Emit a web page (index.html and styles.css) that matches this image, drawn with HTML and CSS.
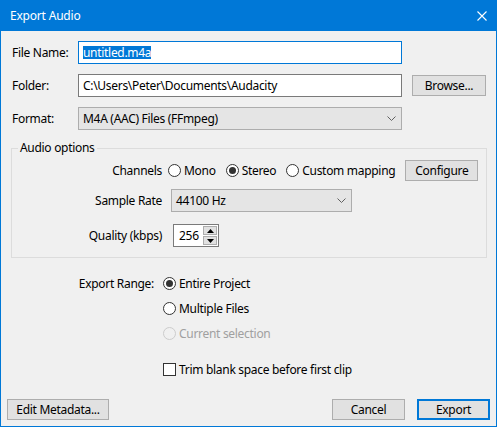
FILE: index.html
```html
<!DOCTYPE html>
<html>
<head>
<meta charset="utf-8">
<title>Export Audio</title>
<link rel="stylesheet" href="styles.css">
</head>
<body>
<div class="window">
  <div class="titlebar">
    <span class="title">Export Audio</span>
    <svg class="close" width="10" height="10" viewBox="0 0 10 10"><path d="M0.5 0.5 L9.5 9.5 M9.5 0.5 L0.5 9.5" stroke="#fff" stroke-width="1.1" fill="none"/></svg>
  </div>
  <div class="content">
    <div class="file-grid">
      <span class="lbl">File Name:</span>
      <div class="textbox focused"><span class="sel">untitled.m4a</span></div>
      <span></span>
      <span class="lbl">Folder:</span>
      <div class="textbox">C:\Users\Peter\Documents\Audacity</div>
      <button class="btn browse">Browse...</button>
      <span class="lbl">Format:</span>
      <div class="select">
        <span>M4A (AAC) Files (FFmpeg)</span>
        <svg class="chev" width="9" height="5" viewBox="0 0 9 5"><path d="M0.5 0.5 L4.5 4.5 L8.5 0.5" stroke="#606060" fill="none"/></svg>
      </div>
    </div>

    <fieldset class="group">
      <legend>Audio options</legend>
      <div class="opt-row channels-row">
        <span class="olbl">Channels</span>
        <div class="channels">
          <span class="radio-item"><span class="radio"></span>Mono</span>
          <span class="radio-item"><span class="radio checked"></span>Stereo</span>
          <span class="radio-item"><span class="radio"></span>Custom mapping</span>
          <button class="btn configure">Configure</button>
        </div>
      </div>
      <div class="opt-row rate-row">
        <span class="olbl">Sample Rate</span>
        <div class="select rate">
          <span>44100 Hz</span>
          <svg class="chev" width="9" height="5" viewBox="0 0 9 5"><path d="M0.5 0.5 L4.5 4.5 L8.5 0.5" stroke="#606060" fill="none"/></svg>
        </div>
      </div>
      <div class="opt-row spin-row">
        <span class="olbl">Quality (kbps)</span>
        <div class="spin">
          <div class="spin-text">256</div>
          <div class="spin-btns">
            <span class="spin-btn"><svg width="7" height="4" viewBox="0 0 7 4"><path d="M3.5 0 L7 4 L0 4 Z" fill="#000"/></svg></span>
            <span class="spin-btn"><svg width="7" height="4" viewBox="0 0 7 4"><path d="M0 0 L7 0 L3.5 4 Z" fill="#000"/></svg></span>
          </div>
        </div>
      </div>
    </fieldset>

    <div class="range">
      <span class="rlbl">Export Range:</span>
      <span class="radio-item"><span class="radio checked"></span>Entire Project</span>
      <span></span>
      <span class="radio-item"><span class="radio"></span>Multiple Files</span>
      <span></span>
      <span class="radio-item disabled"><span class="radio"></span>Current selection</span>
      <span></span>
      <span class="radio-item trim"><span class="check"></span>Trim blank space before first clip</span>
    </div>

    <div class="footer">
      <button class="btn meta">Edit Metadata...</button>
      <span class="spacer"></span>
      <button class="btn cancel">Cancel</button>
      <button class="btn export">Export</button>
    </div>
  </div>
</div>
</body>
</html>
```

FILE: styles.css
```css
* { box-sizing: border-box; }
html, body { margin: 0; padding: 0; }
body {
  font-family: "Noto Sans", "Segoe UI", sans-serif;
  font-size: 12px;
  letter-spacing: -0.3px;
  color: #000;
  background: #f0f0f0;
  white-space: nowrap;
}
.window {
  width: 497px;
  height: 427px;
  border: 1px solid #0078d7;
  border-top: none;
  background: #f0f0f0;
  display: flex;
  flex-direction: column;
}
.titlebar {
  height: 31px;
  margin: 0 -1px;
  background: #0078d7;
  display: flex;
  align-items: center;
  justify-content: space-between;
  padding: 0 10px 0 10px;
  color: #fff;
  flex: none;
}
.title { font-size: 12px; line-height: 16px; letter-spacing: -0.2px; }
.close { display: block; }
.content {
  flex: 1;
  display: flex;
  flex-direction: column;
}
.file-grid {
  margin: 10px 0 0 11px;
  display: grid;
  grid-template-columns: 66px 324px 84px;
  row-gap: 10px;
  grid-auto-rows: 23px;
  align-items: center;
}
.lbl { line-height: 16px; }
.textbox {
  height: 23px;
  border: 1px solid #7a7a7a;
  background: #fff;
  padding: 0 4px;
  display: flex;
  align-items: center;
  overflow: hidden;
  line-height: 16px;
}
.textbox.focused { border-color: #0078d7; }
.sel {
  background: #0078d7;
  color: #fff;
  line-height: 13px;
}
.btn {
  font-family: inherit;
  font-size: 12px;
  letter-spacing: -0.3px;
  white-space: nowrap;
  color: #000;
  height: 21px;
  background: #e1e1e1;
  border: 1px solid #adadad;
  border-radius: 0;
  padding: 0;
  margin: 0;
  line-height: 16px;
}
.browse { width: 74px; justify-self: end; }
.select {
  height: 23px;
  border: 1px solid #adadad;
  background: #e5e5e5;
  display: flex;
  align-items: center;
  justify-content: space-between;
  padding: 0 5px 0 4px;
  line-height: 16px;
}
.chev { display: block; }
.group {
  margin: 10px 0 0 10px;
  width: 476px;
  border: 1px solid #dcdcdc;
  padding: 0 0 10px 0;
  min-width: 0;
}
.group legend {
  margin-left: 6px;
  padding: 0 2px;
  line-height: 16px;
}
.opt-row {
  display: flex;
  align-items: center;
}
.channels-row { margin-top: 4px; height: 21px; }
.rate-row { margin-top: 8px; height: 23px; }
.spin-row { margin-top: 12px; height: 23px; }
.olbl {
  width: 151px;
  text-align: right;
  padding-right: 1px;
  line-height: 16px;
  flex: none;
}
.channels {
  display: flex;
  align-items: center;
  margin-left: 5px;
  height: 21px;
}
.radio-item {
  display: flex;
  align-items: center;
  line-height: 16px;
}
.radio {
  width: 13px;
  height: 13px;
  border: 1px solid #333;
  border-radius: 50%;
  background: #fff;
  margin-right: 3px;
  display: flex;
  align-items: center;
  justify-content: center;
  flex: none;
}
.radio.checked::after {
  content: "";
  width: 7px;
  height: 7px;
  border-radius: 50%;
  background: #333;
}
.channels .radio-item { margin-right: 10px; }
.channels .radio-item:nth-child(3) { margin-right: 10px; }
.configure { width: 73px; }
.rate {
  width: 181px;
  margin-left: 8px;
}
.spin {
  display: flex;
  margin-left: 10px;
  height: 23px;
}
.spin-text {
  width: 30px;
  height: 23px;
  border: 1px solid #7a7a7a;
  border-right: none;
  background: #fff;
  padding-left: 5px;
  display: flex;
  align-items: center;
  line-height: 16px;
}
.spin-btns {
  display: flex;
  flex-direction: column;
  width: 16px;
  height: 23px;
  border: 1px solid #7a7a7a;
  border-left: none;
  background: #fff;
  padding: 1px 1px 1px 0;
  gap: 1px;
}
.spin-btn {
  flex: 1;
  background: #e1e1e1;
  border: 1px solid #adadad;
  display: flex;
  align-items: center;
  justify-content: center;
}
.spin-btn svg { display: block; }
.range {
  display: grid;
  grid-template-columns: 153px auto;
  column-gap: 9px;
  row-gap: 8px;
  margin-top: 17px;
  align-items: center;
  justify-items: start;
}
.rlbl {
  justify-self: end;
  line-height: 16px;
}
.range .radio-item { height: 17px; }
.radio-item.disabled { color: #a0a0a0; }
.radio-item.disabled .radio { border-color: #cccccc; background: #f0f0f0; }
.range .trim { margin-top: 11px; }
.check {
  width: 13px;
  height: 13px;
  border: 1px solid #333;
  background: #fff;
  margin-right: 3px;
  flex: none;
}
.footer {
  margin-top: auto;
  display: flex;
  align-items: center;
  padding: 0 6px 6px 6px;
}
.spacer { flex: 1; }
.meta { width: 102px; }
.cancel { width: 73px; }
.export {
  width: 73px;
  margin-left: 12px;
  border: 2px solid #0078d7;
}
```
